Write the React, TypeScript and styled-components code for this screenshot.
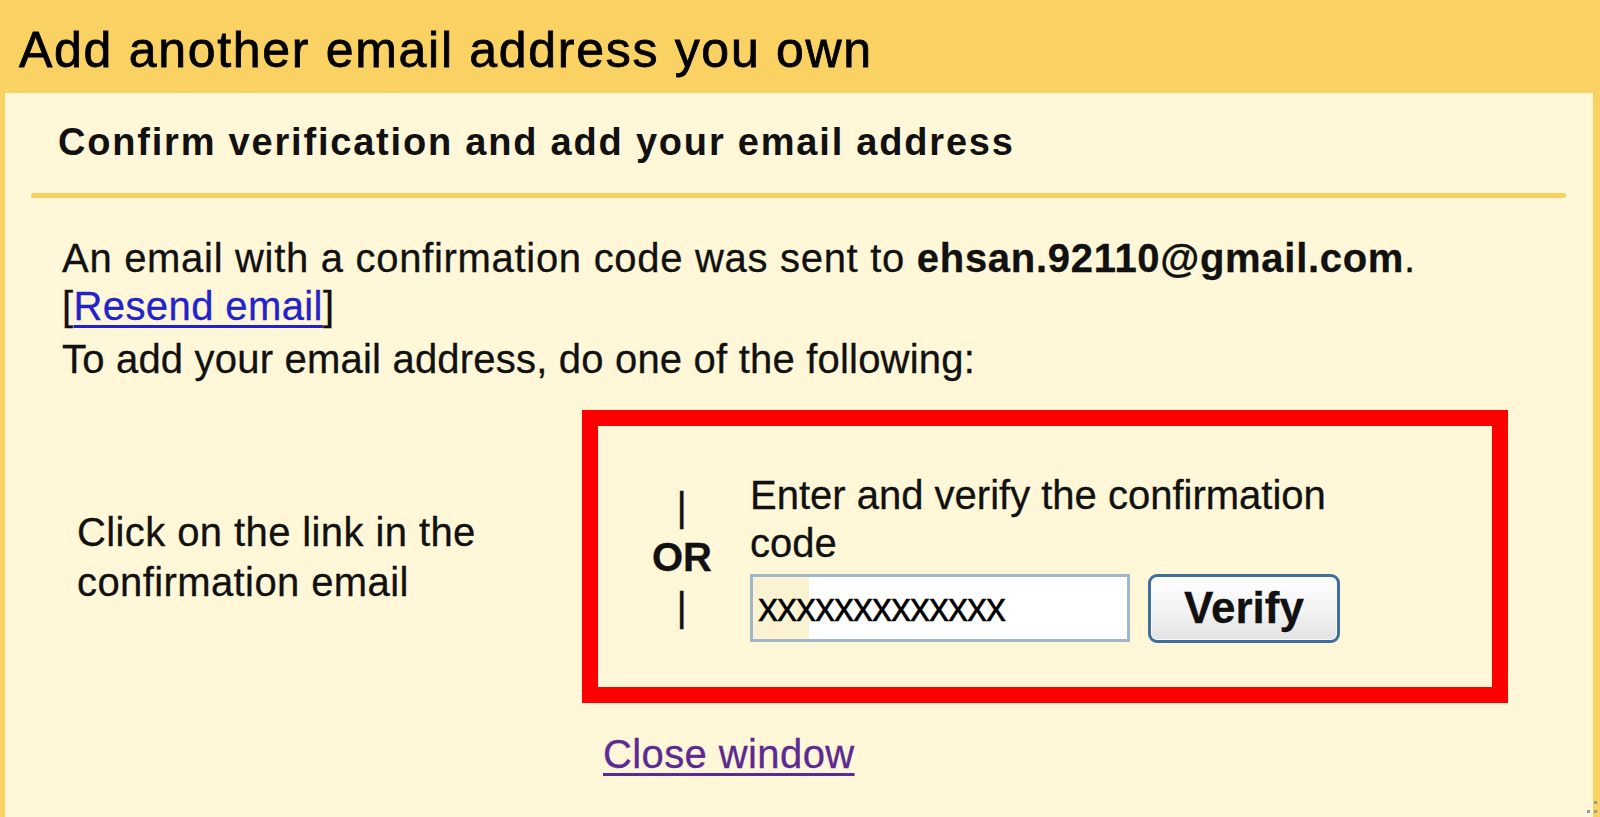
import React from "react";
import styled, { createGlobalStyle } from "styled-components";

const Global = createGlobalStyle`
  html, body { margin: 0; padding: 0; }
  body { font-family: "Liberation Sans", Arial, sans-serif; color: #000; }
  * { box-sizing: border-box; }
`;

const Page = styled.div`
  width: 1600px;
  height: 817px;
  overflow: hidden;
  background: #fad163;
  display: flex;
  flex-direction: column;
  position: relative;
`;

const Header = styled.h1`
  margin: 0;
  padding: 10px 0 3px 19px;
  font-size: 50px;
  line-height: 80px;
  font-weight: normal;
  letter-spacing: 1.7px;
  color: #000;
  -webkit-text-stroke: 0.8px #000;
`;

const Panel = styled.div`
  flex: 1;
  margin: 0 7px 0 5px;
  background: #fff7d7;
  display: flex;
  flex-direction: column;
`;

const SectionTitle = styled.h2`
  margin: 0;
  padding: 26px 0 0 53px;
  font-size: 38px;
  line-height: 46px;
  font-weight: bold;
  letter-spacing: 1.8px;
  color: #111;
`;

const Rule = styled.div`
  height: 5px;
  margin: 28px 27px 0 26px;
  background: #f9cf5f;
  border-radius: 2px;
`;

const Body = styled.div`
  margin-top: 36px;
  padding-left: 57px;
  font-size: 40px;
  letter-spacing: 0.4px;
  color: #111;
  -webkit-text-stroke: 0.3px #111;
`;

const Line = styled.div<{ $gap?: number; $spacing?: number }>`
  line-height: 48px;
  margin-top: ${(p) => p.$gap ?? 0}px;
  letter-spacing: ${(p) => p.$spacing ?? 0.4}px;
  white-space: nowrap;
`;

const Link = styled.a<{ $visited?: boolean }>`
  color: ${(p) => (p.$visited ? "#5b2a92" : "#2323cc")};
  -webkit-text-stroke-color: ${(p) => (p.$visited ? "#5b2a92" : "#2323cc")};
  text-decoration: underline;
  text-underline-offset: 5px;
  text-decoration-thickness: 3px;
  cursor: pointer;
`;

const Options = styled.div`
  margin: 27px 0 0 15px;
  display: grid;
  grid-template-columns: 505px 926px;
  row-gap: 27px;
`;

const LeftCell = styled.div`
  align-self: center;
  line-height: 50px;
  padding-right: 20px;
`;

const RedBox = styled.div`
  height: 293px;
  border: 16px solid #ff0000;
  display: flex;
  align-items: center;
  padding-left: 34px;
`;

const OrColumn = styled.div`
  width: 100px;
  margin-right: 18px;
  text-align: center;
  line-height: 50px;
  display: flex;
  flex-direction: column;
`;

const Bar = styled.span`
  font-weight: normal;
`;

const OrText = styled.span`
  font-weight: bold;
  letter-spacing: 0;
`;

const CodeColumn = styled.div`
  width: 590px;
  line-height: 48px;
  letter-spacing: 0;
`;

const CodeRow = styled.div`
  display: flex;
  gap: 18px;
  margin-top: 7px;
`;

const CodeInput = styled.input`
  width: 380px;
  height: 68px;
  border: 3px solid #a3b7cb;
  background: linear-gradient(to right, #fbf2d2 0 56px, #ffffff 56px);
  font-family: "Liberation Sans", Arial, sans-serif;
  font-size: 40px;
  letter-spacing: -1px;
  padding: 0 0 0 5px;
  color: #000;
  outline: none;
`;

const VerifyButton = styled.button`
  width: 192px;
  height: 69px;
  border: 3px solid #3f6f9e;
  border-radius: 9px;
  background: linear-gradient(#ffffff, #f2f2f2 55%, #e2e2e2);
  font-family: "Liberation Sans", Arial, sans-serif;
  font-size: 44px;
  font-weight: bold;
  color: #111;
  padding: 0;
  box-shadow: inset 0 0 0 1px #ffffff;
`;

const CloseCell = styled.div`
  grid-column: 2;
  padding-left: 21px;
  line-height: 48px;
`;

const Grip = styled.svg`
  position: absolute;
  right: 0;
  bottom: 0;
`;

export default function App() {
  return (
    <Page>
      <Global />
      <Header>Add another email address you own</Header>
      <Panel>
        <SectionTitle>Confirm verification and add your email address</SectionTitle>
        <Rule />
        <Body>
          <Line $spacing={0.7}>
            An email with a confirmation code was sent to <b>ehsan.92110@gmail.com</b>.
          </Line>
          <Line>
            [<Link>Resend email</Link>]
          </Line>
          <Line $gap={5} $spacing={0.2}>
            To add your email address, do one of the following:
          </Line>
          <Options>
            <LeftCell>Click on the link in the confirmation email</LeftCell>
            <RedBox>
              <OrColumn>
                <Bar>|</Bar>
                <OrText>OR</OrText>
                <Bar>|</Bar>
              </OrColumn>
              <CodeColumn>
                Enter and verify the confirmation code
                <CodeRow>
                  <CodeInput readOnly value="xxxxxxxxxxxxx" />
                  <VerifyButton>Verify</VerifyButton>
                </CodeRow>
              </CodeColumn>
            </RedBox>
            <CloseCell>
              <Link $visited>Close window</Link>
            </CloseCell>
          </Options>
        </Body>
      </Panel>
      <Grip width="22" height="18" viewBox="0 0 22 18">
        <rect x="16" y="2" width="3" height="3" fill="#9a9a9a" />
        <rect x="9" y="11" width="3" height="3" fill="#9a9a9a" />
        <rect x="16" y="11" width="3" height="3" fill="#9a9a9a" />
      </Grip>
    </Page>
  );
}
